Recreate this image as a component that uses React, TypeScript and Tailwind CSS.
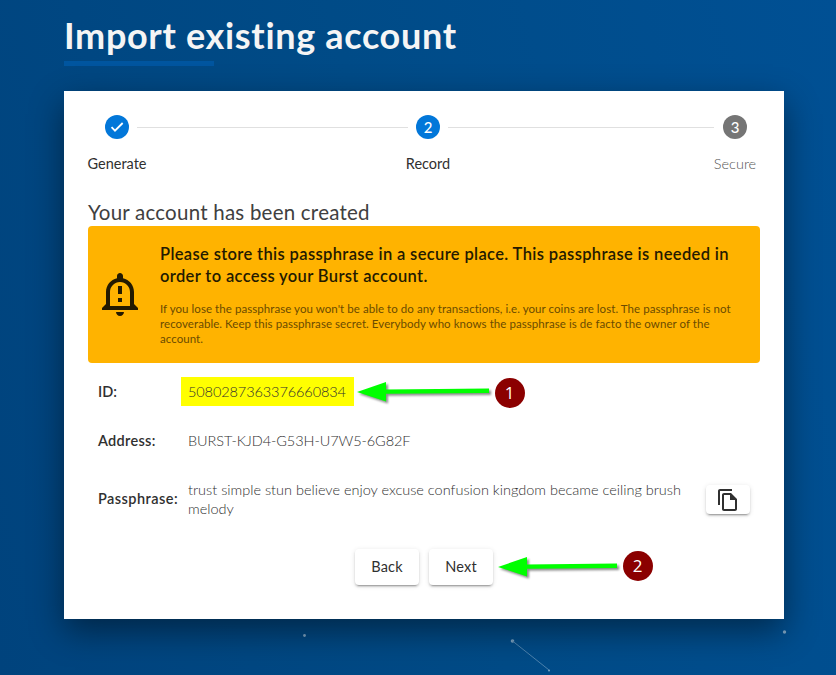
import React from "react";
import { MdOutlineFileCopy, MdOutlineNotificationImportant } from "react-icons/md";

function Step({ label, active, className, children }: { label: string; active: boolean; className: string; children: React.ReactNode }) {
  return (
    <div className={`flex shrink-0 flex-col items-center ${className}`}>
      <div className={`flex size-6 items-center justify-center rounded-full text-[15px] leading-6 font-medium text-white ${active ? "bg-[#0277d9]" : "bg-[#757575]"}`}>
        {children}
      </div>
      <span className="mt-[15px] whitespace-nowrap leading-5">{label}</span>
    </div>
  );
}

function Arrow({ className, length }: { className: string; length: number }) {
  return (
    <svg className={`absolute overflow-visible drop-shadow-[2px_2px_1px_rgba(0,0,0,0.45)] ${className}`} width={length} height="22" viewBox={`0 0 ${length} 22`}>
      <path d={`M0 11 L29 1 V8.5 L${length} 7.5 V12 L29 12.8 V20.5 Z`} fill="#00ff00" />
    </svg>
  );
}

function Marker({ className, children }: { className: string; children: React.ReactNode }) {
  return (
    <span className={`absolute flex size-[30px] items-center justify-center rounded-full bg-[#8b0000] pb-px font-['Open_Sans',sans-serif] text-[17px] leading-none font-normal text-white ${className}`}>
      {children}
    </span>
  );
}

const button = "flex items-center justify-center rounded bg-white shadow-[0_3px_1px_-2px_rgba(0,0,0,0.2),0_2px_2px_0_rgba(0,0,0,0.14),0_1px_5px_0_rgba(0,0,0,0.12)]";

export default function App() {
  return (
    <div className="relative h-[675px] w-[836px] overflow-hidden bg-[linear-gradient(75deg,#00437d_0%,#004b87_50%,#005094_100%)] px-16 font-['Lato',sans-serif] text-[#303030]">
      <svg className="absolute inset-0" width="836" height="675" fill="#7fa5c3">
        <circle cx="304.5" cy="635.5" r="1.4" />
        <circle cx="512.5" cy="641" r="1.8" />
        <circle cx="784.5" cy="632" r="1.7" />
        <circle cx="549" cy="670.5" r="1" />
        <path d="M512.5 641 L549 670" stroke="#4d82ae" strokeWidth="1" />
      </svg>

      <h1 className="relative h-[61px] pt-[13px] text-[36px] leading-[44px] font-bold tracking-[0.67px] whitespace-nowrap text-[#f5f5f5]">Import existing account</h1>
      <div className="relative h-[5px] w-[150px] bg-[#00559f]" />

      <main className="relative mt-[25px] h-[528px] w-[720px] bg-white px-6 pt-6 shadow-[0_12px_32px_rgba(0,0,0,0.45)]">
        <div className="flex h-[68px] items-start text-[14.5px]">
          <Step label="Generate" active className="w-[58px]">
            <svg className="size-4" viewBox="0 0 24 24" fill="none" stroke="currentColor" strokeWidth="2.7">
              <path d="M3.8 12.3 L9 17.5 L20.5 6" />
            </svg>
          </Step>
          <div className="mt-3 ml-[-9px] h-px w-[271px] shrink-0 bg-[#e0e0e0]" />
          <Step label="Record" active className="ml-[-3px] w-[46px]">2</Step>
          <div className="mt-3 ml-[-3px] h-px w-[266px] shrink-0 bg-[#e0e0e0]" />
          <div className="ml-[-1px] font-light text-[#555]">
            <Step label="Secure" active={false} className="w-[44px]">3</Step>
          </div>
        </div>

        <h2 className="mt-[17px] h-[26px] text-[20.5px] leading-[24px] tracking-[0.23px] whitespace-nowrap text-[#404040]">Your account has been created</h2>

        <section className="flex h-[137px] items-center rounded bg-[#ffb300] pl-2">
          <MdOutlineNotificationImportant className="mt-[-1px] size-12 shrink-0 text-[#241a00]" />
          <div className="ml-4 whitespace-nowrap">
            <p className="text-[16.5px] leading-[22px] font-semibold tracking-[0.36px] text-[#241a00]">
              Please store this passphrase in a secure place. This passphrase is needed in<br />order to access your Burst account.
            </p>
            <p className="mt-[14px] text-[11.5px] leading-[15px] tracking-[0.06px] text-[#6b4b00]">
              If you lose the passphrase you won't be able to do any transactions, i.e. your coins are lost. The passphrase is not<br />recoverable. Keep this passphrase secret. Everybody who knows the passphrase is de facto the owner of the<br />account.
            </p>
          </div>
        </section>

        <dl className="grid grid-cols-[83px_1fr] pl-[10px] text-[14.5px] leading-[19px] whitespace-nowrap">
          <dt className="mt-[19px] font-semibold">ID:</dt>
          <dd className="mt-[14px] flex h-[29px] w-[173px] items-center bg-[#ffff00] pl-[7px] font-light tracking-[-0.1px]">5080287363376660834</dd>
          <dt className="mt-[25px] font-semibold tracking-[0.3px]">Address:</dt>
          <dd className="mt-[25px] pl-[7px] font-light tracking-[-0.08px]">BURST-KJD4-G53H-U7W5-6G82F</dd>
          <dt className="mt-[39px] font-semibold tracking-[0.45px]">Passphrase:</dt>
          <dd className="mt-[30px] flex items-start pl-[7px]">
            <p className="w-[518px] font-light">trust simple stun believe enjoy excuse confusion kingdom became ceiling brush<br />melody</p>
            <button className={`mt-[5px] h-[29px] w-11 shrink-0 ${button}`}><MdOutlineFileCopy className="size-6" /></button>
          </dd>
        </dl>

        <div className="mt-[31px] ml-[267px] flex gap-[10px] text-[14.5px] tracking-[0.2px]">
          <button className={`h-9 w-16 pb-px ${button}`}>Back</button>
          <button className={`h-9 w-16 pb-px ${button}`}>Next</button>
        </div>
      </main>

      <Arrow className="top-[381px] left-[357px]" length={132} />
      <Marker className="top-[377.5px] left-[494.5px]">1</Marker>
      <Arrow className="top-[556px] left-[498px]" length={119} />
      <Marker className="top-[550.5px] left-[622.5px]">2</Marker>
    </div>
  );
}
